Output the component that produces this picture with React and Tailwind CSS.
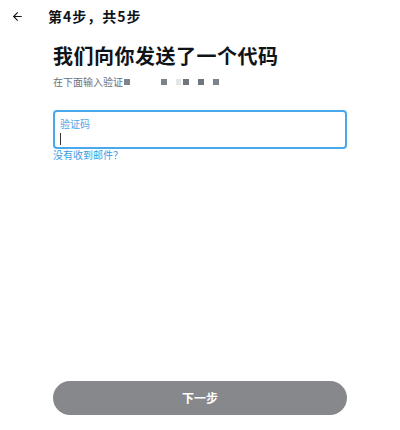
import { ArrowLeft } from 'lucide-react';

const font = { fontFamily: '"Noto Sans CJK SC", "Liberation Sans", sans-serif' };

// masked address shown as grey blocks
const BLOCKS = [
  { w: 'w-[6px]', c: 'bg-[#7c838b]', ml: 'ml-[1px]' },
  { w: 'w-[6px]', c: 'bg-[#7c838b]', ml: 'ml-[31px]' },
  { w: 'w-[5px]', c: 'bg-[#e4e6e8]', ml: 'ml-[9px]' },
  { w: 'w-[6px]', c: 'bg-[#6f767e]', ml: 'ml-[2px]' },
  { w: 'w-[6px]', c: 'bg-[#6f767e]', ml: 'ml-[9px]' },
  { w: 'w-[6px]', c: 'bg-[#7c838b]', ml: 'ml-[9px]' },
];

export default function App() {
  return (
    <div className="flex h-[430px] w-[400px] flex-col bg-white text-[#0f1419]" style={font}>
      <div className="flex h-[32px] items-center">
        <button className="ml-[10px] flex h-[14px] w-[14px] items-center justify-center text-[#0f1419]">
          <ArrowLeft size={13} strokeWidth={2} />
        </button>
        <div className="ml-[24px] text-[14px] font-bold leading-none tracking-[1px]">
          第4步，共5步
        </div>
      </div>

      <div className="flex flex-1 flex-col px-[53px]">
        <h1 className="mt-[10px] text-[20px] font-bold leading-[28px] tracking-[0.5px]">
          我们向你发送了一个代码
        </h1>
        <div className="mt-[5px] flex items-center text-[10px] leading-[14px] text-[#6b7280]">
          <span>在下面输入验证</span>
          {BLOCKS.map((b, i) => (
            <span key={i} className={`inline-block h-[6px] ${b.w} ${b.c} ${b.ml}`} />
          ))}
        </div>

        <div className="mt-[21px] flex h-[39px] flex-col rounded-[4px] border-2 border-[#4aa8ec] px-[5px] pt-[5px]">
          <span className="text-[10px] leading-[13px] text-[#4aa8ec]">验证码</span>
          <span className="mt-[3px] h-[12px] w-px bg-[#333]" />
        </div>
        <a className="mt-0 text-[10px] leading-[12px] text-[#3b9de4]">没有收到邮件？</a>

        <div className="mt-auto mb-[15px]">
          <button className="flex h-[34px] w-full items-center justify-center rounded-full bg-[#87888c] text-[12px] font-bold text-white">
            下一步
          </button>
        </div>
      </div>
    </div>
  );
}
